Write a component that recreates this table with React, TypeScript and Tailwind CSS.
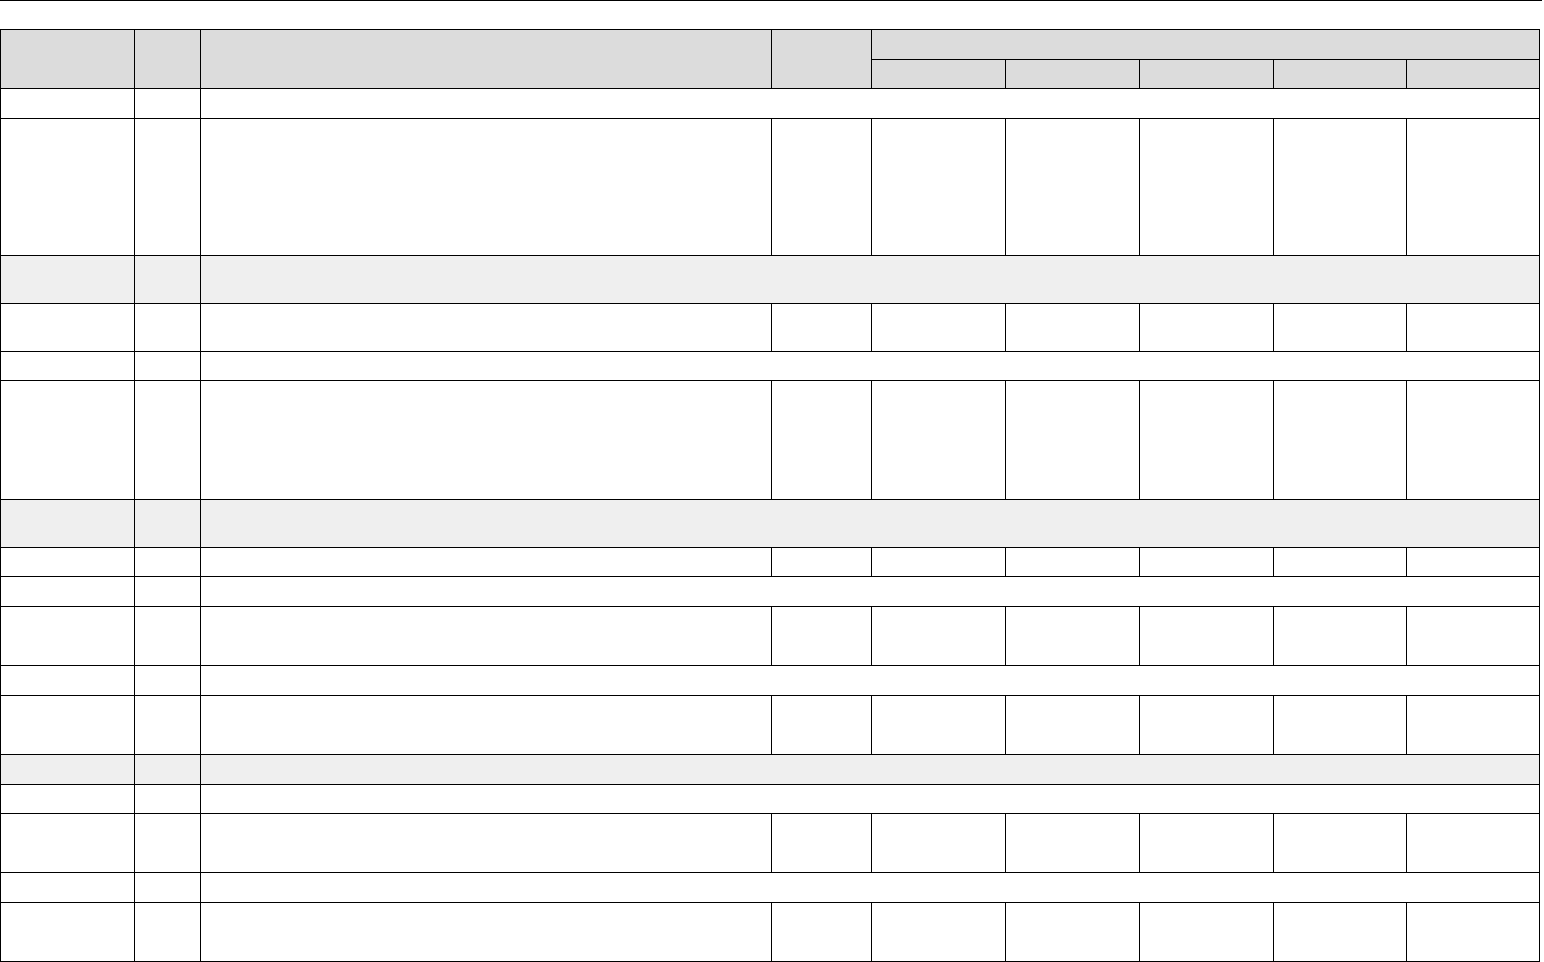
type Row = { h: string; kind: "full" | "merged"; shaded?: boolean }

const rows: Row[] = [
  { h: "h-[30px]", kind: "merged" },
  { h: "h-[137px]", kind: "full" },
  { h: "h-[48px]", kind: "merged", shaded: true },
  { h: "h-[48px]", kind: "full" },
  { h: "h-[29px]", kind: "merged" },
  { h: "h-[119px]", kind: "full" },
  { h: "h-[48px]", kind: "merged", shaded: true },
  { h: "h-[29px]", kind: "full" },
  { h: "h-[30px]", kind: "merged" },
  { h: "h-[59px]", kind: "full" },
  { h: "h-[30px]", kind: "merged" },
  { h: "h-[59px]", kind: "full" },
  { h: "h-[30px]", kind: "merged", shaded: true },
  { h: "h-[29px]", kind: "merged" },
  { h: "h-[59px]", kind: "full" },
  { h: "h-[30px]", kind: "merged" },
  { h: "h-[59px]", kind: "full" },
]

const cell = "border-r border-b border-black p-0"

export default function App() {
  return (
    <div className="bg-white min-h-screen" style={{ fontFamily: "'Liberation Sans', Arial, sans-serif" }}>
      <div className="h-px w-[1542px] bg-black" />
      <table className="mt-[28px] table-fixed border-separate border-spacing-0 border-l border-t border-black w-[1540px]">
        <colgroup>
          <col className="w-[134px]" />
          <col className="w-[66px]" />
          <col className="w-[571px]" />
          <col className="w-[100px]" />
          <col className="w-[134px]" />
          <col className="w-[134px]" />
          <col className="w-[134px]" />
          <col className="w-[133px]" />
          <col className="w-[133px]" />
        </colgroup>
        <thead className="bg-[#dcdcdc]">
          <tr className="h-[30px]">
            <th rowSpan={2} className={cell}></th>
            <th rowSpan={2} className={cell}></th>
            <th rowSpan={2} className={cell}></th>
            <th rowSpan={2} className={cell}></th>
            <th colSpan={5} className={cell}></th>
          </tr>
          <tr className="h-[29px]">
            <th className={cell}></th>
            <th className={cell}></th>
            <th className={cell}></th>
            <th className={cell}></th>
            <th className={cell}></th>
          </tr>
        </thead>
        <tbody>
          {rows.map((r, i) => (
            <tr key={i} className={`${r.h} ${r.shaded ? "bg-[#efefef]" : ""}`}>
              <td className={cell}></td>
              <td className={cell}></td>
              {r.kind === "merged" ? (
                <td colSpan={7} className={cell}></td>
              ) : (
                <>
                  <td className={cell}></td>
                  <td className={cell}></td>
                  <td className={cell}></td>
                  <td className={cell}></td>
                  <td className={cell}></td>
                  <td className={cell}></td>
                  <td className={cell}></td>
                </>
              )}
            </tr>
          ))}
        </tbody>
      </table>
    </div>
  )
}
